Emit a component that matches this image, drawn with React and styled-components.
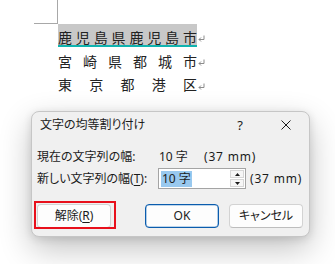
import React from "react";
import styled, { createGlobalStyle, css } from "styled-components";

const Global = createGlobalStyle`
  html, body { margin: 0; padding: 0; background: #ffffff; }
  body {
    width: 335px; height: 264px; overflow: hidden;
    font-family: "Noto Sans CJK JP", "Noto Sans", sans-serif;
  }
`;

const Page = styled.div`
  width: 335px;
  height: 264px;
  display: flex;
  flex-direction: column;
  background: #ffffff;
  overflow: hidden;
`;

const CropMark = styled.div`
  flex: none;
  margin-left: 34px;
  width: 24px;
  height: 24px;
  box-sizing: border-box;
  border-right: 1px solid #a8a8a8;
  border-bottom: 1px solid #a8a8a8;
`;

const Doc = styled.div`
  flex: none;
  margin-left: 58px;
  display: flex;
  flex-direction: column;
  font-family: "Noto Sans CJK JP", sans-serif;
  font-size: 14px;
  color: #222222;
`;

const Line = styled.div`
  display: flex;
  align-items: center;
  height: ${(p) => (p.$first ? "23px" : "23.5px")};
  margin-top: ${(p) => (p.$gap ? "2px" : "0")};
`;

const Spread = styled.div`
  display: flex;
  justify-content: space-between;
  align-items: center;
  width: 139px;
  line-height: 16px;
  ${(p) =>
    p.$selected &&
    css`
      align-self: stretch;
      box-sizing: border-box;
      padding-top: 5px;
      background: #c8c8c8;
      border-bottom: 2px solid #10b4b0;
    `}
`;

const Mark = styled.svg`
  flex: none;
  margin-left: 1px;
  margin-top: ${(p) => (p.$first ? "5px" : "4px")};
  width: 7px;
  height: 7px;
`;

const ReturnMark = ({ first }) => (
  <Mark $first={first} viewBox="0 0 7 7">
    <path d="M6 0.5V4.5H1M3 2.5L1 4.5L3 6.5" fill="none" stroke="#8c8c8c" strokeWidth="1" />
  </Mark>
);

const DocLine = ({ text, selected, first, gap }) => (
  <Line $first={first} $gap={gap}>
    <Spread $selected={selected}>
      {Array.from(text).map((c, i) => (
        <span key={i}>{c}</span>
      ))}
    </Spread>
    <ReturnMark first={first} />
  </Line>
);

const Dialog = styled.div`
  flex: none;
  margin: 15px 0 0 31px;
  width: 279px;
  height: 126px;
  box-sizing: border-box;
  background: #f0f0f0;
  border: 1px solid #c6c6c6;
  border-radius: 8px;
  box-shadow: 0 12px 32px rgba(0, 0, 0, 0.24), 0 2px 8px rgba(0, 0, 0, 0.12);
  display: flex;
  flex-direction: column;
  font-family: "Noto Sans", "Noto Sans CJK JP", sans-serif;
  font-size: 12px;
  font-feature-settings: "palt";
  color: #1b1b1b;
`;

const TitleBar = styled.div`
  height: 26px;
  display: flex;
  align-items: center;
  padding-left: 8px;
`;

const Title = styled.div`
  flex: 1;
  line-height: 16px;
`;

const CaptionButton = styled.div`
  width: 46px;
  height: 26px;
  display: flex;
  align-items: center;
  justify-content: center;
  font-size: 13px;
`;

const Body = styled.div`
  padding: 0 6px 0 5px;
  display: flex;
  flex-direction: column;
`;

const Row = styled.div`
  display: flex;
  align-items: center;
  height: ${(p) => p.$h}px;
  margin-top: ${(p) => p.$mt}px;
  line-height: 16px;
`;

const Label = styled.div`
  width: 121px;
  flex: none;
`;

const Value = styled.div`
  width: 45px;
  padding-left: 1px;
  flex: none;
`;

const Unit = styled.div`
  margin-left: ${(p) => p.$ml || 0}px;
  letter-spacing: 0.8px;
`;

const Input = styled.div`
  width: 88px;
  height: 21px;
  box-sizing: border-box;
  flex: none;
  border: 1px solid #a4a4a4;
  background: #ffffff;
  display: flex;
  align-items: center;
  padding-left: 2px;
  padding-right: 1px;
`;

const Selected = styled.span`
  background: #99c9ef;
  line-height: 16px;
  padding: 0 1px;
`;

const Spinner = styled.div`
  margin-left: auto;
  width: 14px;
  display: flex;
  flex-direction: column;
  gap: 1px;
`;

const SpinBtn = styled.div`
  height: 8px;
  box-sizing: border-box;
  border: 1px solid #d6d6d6;
  background: #f6f6f6;
  display: flex;
  align-items: center;
  justify-content: center;
`;

const Buttons = styled.div`
  margin-top: 15px;
  height: 24px;
  display: flex;
  gap: 10px;
`;

const ClearWrap = styled.div`
  position: relative;
  margin-right: auto;
  &::after {
    content: "";
    position: absolute;
    top: -3px;
    left: -3px;
    right: -5px;
    bottom: -1px;
    border: 2px solid #e8101c;
    pointer-events: none;
  }
`;

const Button = styled.div`
  width: 74px;
  height: 24px;
  box-sizing: border-box;
  border-radius: 4px;
  display: flex;
  align-items: center;
  justify-content: center;
  line-height: 16px;
  background: #fdfdfd;
  border: 1px solid #d3d3d3;
  border-bottom-color: #bdbdbd;
  ${(p) =>
    p.$primary &&
    css`
      border: 1px solid #0b5cad;
      box-shadow: inset 0 0 0 0.6px rgba(0, 95, 184, 0.5);
    `}
`;

const Key = styled.u`
  text-decoration-thickness: 1px;
  text-underline-offset: 2px;
`;

export default function App() {
  return (
    <>
      <Global />
      <Page>
        <CropMark />
        <Doc>
          <DocLine text="鹿児島県鹿児島市" selected first />
          <DocLine text="宮崎県都城市" gap />
          <DocLine text="東京都港区" />
        </Doc>
        <Dialog>
          <TitleBar>
            <Title>文字の均等割り付け</Title>
            <CaptionButton>?</CaptionButton>
            <CaptionButton>
              <svg width="10" height="10" viewBox="0 0 10 10">
                <path d="M0.5 0.5L9.5 9.5M9.5 0.5L0.5 9.5" stroke="#1b1b1b" strokeWidth="1" />
              </svg>
            </CaptionButton>
          </TitleBar>
          <Body>
            <Row $h={18} $mt={10}>
              <Label>現在の文字列の幅:</Label>
              <Value>10 字</Value>
              <Unit>(37 mm)</Unit>
            </Row>
            <Row $h={21} $mt={2}>
              <Label>
                新しい文字列の幅(<Key>T</Key>):
              </Label>
              <Input>
                <Selected>10 字</Selected>
                <Spinner>
                  <SpinBtn>
                    <svg width="5" height="3" viewBox="0 0 5 3">
                      <path d="M2.5 0L5 3H0Z" fill="#1b1b1b" />
                    </svg>
                  </SpinBtn>
                  <SpinBtn>
                    <svg width="5" height="3" viewBox="0 0 5 3">
                      <path d="M0 0H5L2.5 3Z" fill="#1b1b1b" />
                    </svg>
                  </SpinBtn>
                </Spinner>
              </Input>
              <Unit $ml={4}>(37 mm)</Unit>
            </Row>
            <Buttons>
              <ClearWrap>
                <Button>
                  解除(<Key>R</Key>)
                </Button>
              </ClearWrap>
              <Button $primary>OK</Button>
              <Button>キャンセル</Button>
            </Buttons>
          </Body>
        </Dialog>
      </Page>
    </>
  );
}
